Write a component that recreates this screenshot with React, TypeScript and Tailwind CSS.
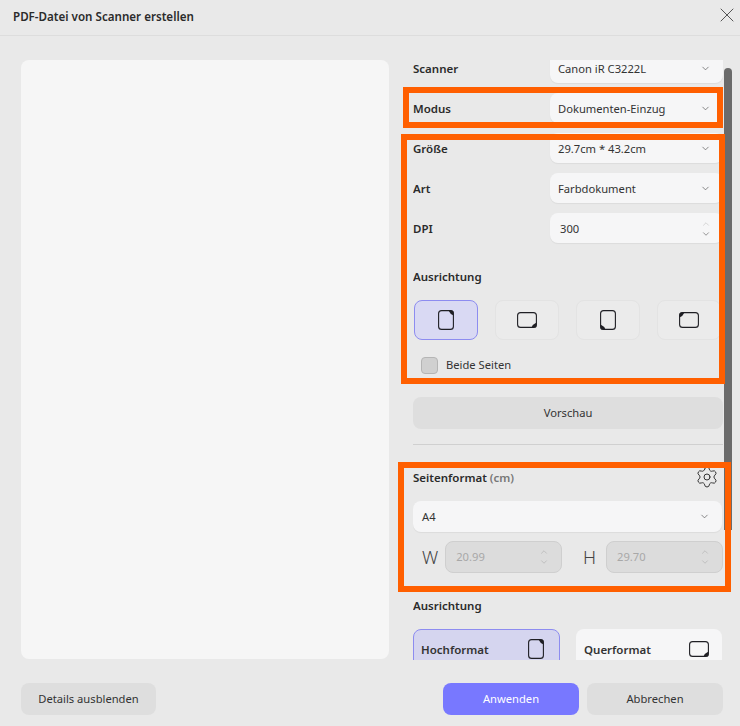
import { ChevronDown, ChevronUp, Settings, X } from "lucide-react";

type Corner = "tr" | "br" | "bl" | "tl";

// page outline with a filled dog-ear in one corner
const PageIcon = ({ wide, corner }: { wide: boolean; corner: Corner }) => {
  const w = wide ? 20 : 16;
  const h = wide ? 16 : 20;
  const s = 5.5;
  const ear = {
    tr: `M${w - s} 0.5 H${w - 2} Q${w - 0.5} 0.5 ${w - 0.5} 2 V${s} Q${w - 4} 4 ${w - s} 0.5 Z`,
    br: `M${w - 0.5} ${h - s} V${h - 2} Q${w - 0.5} ${h - 0.5} ${w - 2} ${h - 0.5} H${w - s} Q${w - 4} ${h - 4} ${w - 0.5} ${h - s} Z`,
    bl: `M${s} ${h - 0.5} H2 Q0.5 ${h - 0.5} 0.5 ${h - 2} V${h - s} Q4 ${h - 4} ${s} ${h - 0.5} Z`,
    tl: `M0.5 ${s} V2 Q0.5 0.5 2 0.5 H${s} Q4 4 0.5 ${s} Z`,
  }[corner];
  return (
    <svg width={w} height={h} viewBox={`0 0 ${w} ${h}`} fill="none">
      <rect x="0.6" y="0.6" width={w - 1.2} height={h - 1.2} rx="3" stroke="#1f1f24" strokeWidth="1.1" />
      <path d={ear} fill="#1f1f24" />
    </svg>
  );
};

const Select = ({ value, className = "" }: { value: string; className?: string }) => (
  <div className={`flex items-center justify-between rounded-lg bg-[#f6f6f7] pr-3 shadow-[0_1px_1px_rgba(0,0,0,0.06)] ${className}`}>
    <span className="text-[11.2px] text-[#333]">{value}</span>
    <ChevronDown size={11} strokeWidth={1.5} className="text-[#555]" />
  </div>
);

const Row = ({ label, children }: { label: string; children: React.ReactNode }) => (
  <div className="flex h-[40px] items-center justify-between">
    <span className="text-[11.5px] font-semibold text-[#2b2b2b]">{label}</span>
    {children}
  </div>
);

const Stepper = ({ up, down, className = "" }: { up: string; down: string; className?: string }) => (
  <div className={`flex flex-col items-center ${className}`}>
    <ChevronUp size={10} strokeWidth={1.2} className={up} />
    <ChevronDown size={10} strokeWidth={1.2} className={down} />
  </div>
);

const SizeInput = ({ label, value, gap }: { label: string; value: string; gap: string }) => (
  <div className={`flex items-center ${gap}`}>
    <span className="text-[18px] font-light text-[#444]">{label}</span>
    <div className="flex h-[32px] w-[117px] items-center justify-between rounded-lg border border-[#cfcfcf] bg-[#dcdcdc] pl-[10px] pr-3">
      <span className="text-[11.2px] text-[#a8a8a8]">{value}</span>
      <Stepper up="text-[#a3a3a3]" down="text-[#a3a3a3]" />
    </div>
  </div>
);

const OrientButton = ({ wide, corner, active }: { wide: boolean; corner: Corner; active?: boolean }) => (
  <div
    className={`flex h-[40px] w-[64px] shrink-0 items-center justify-center rounded-lg border ${
      active ? "border-[#8d8cf0] bg-[#d9d9f3]" : "border-[#e3e3e3] bg-[#ebebeb]"
    }`}
  >
    <PageIcon wide={wide} corner={corner} />
  </div>
);

const Highlight = ({ className }: { className: string }) => (
  <div className={`pointer-events-none absolute border-[6px] border-[#ff5f00] ${className}`} />
);

export default function App() {
  return (
    <div className="relative flex h-[726px] w-[740px] flex-col overflow-hidden bg-[#e9e9e9] font-['Noto_Sans',sans-serif] leading-[18px]">
      <header className="flex h-[36px] shrink-0 items-center justify-between border-b border-[#dddddd] pl-[13px] pr-[1px]">
        <h1 className="-mt-[2px] text-[11.6px] font-semibold text-[#2b2b2b]">PDF-Datei von Scanner erstellen</h1>
        <X size={24} strokeWidth={0.9} className="-mt-[6px] text-[#444]" />
      </header>

      <div className="flex">
        <div className="ml-[21px] mt-[24px] h-[599px] w-[368px] rounded-lg bg-[#f6f6f6]" />

        <div className="ml-[24px] mt-[24px] h-[600px] w-[310px] overflow-hidden">
          <div className="-mt-[12px]">
            <div className="translate-y-px">
              <Row label="Scanner">
                <Select value="Canon iR C3222L" className="h-[30px] w-[173px] -translate-y-px pl-2 pt-px" />
              </Row>
              <Row label="Modus">
                <Select value="Dokumenten-Einzug" className="h-[30px] w-[173px] -translate-y-px pl-2 pt-px" />
              </Row>
              <Row label="Größe">
                <Select value="29.7cm * 43.2cm" className="h-[30px] w-[173px] -translate-y-px pl-2 pt-px" />
              </Row>
              <Row label="Art">
                <Select value="Farbdokument" className="h-[30px] w-[173px] -translate-y-px pl-2 pt-px" />
              </Row>
              <Row label="DPI">
                <div className="flex h-[30px] w-[173px] -translate-y-px items-center justify-between rounded-lg bg-[#f6f6f7] pl-[10px] pr-3 pt-px shadow-[0_1px_1px_rgba(0,0,0,0.06)]">
                  <span className="text-[11.2px] text-[#333]">300</span>
                  <Stepper up="text-[#b5b5b5]" down="text-[#333]" />
                </div>
              </Row>
            </div>

            <div className="mt-[20px] text-[11.5px] font-semibold text-[#2b2b2b]">Ausrichtung</div>
            <div className="mt-[14px] flex gap-[17px] pl-[1px]">
              <OrientButton wide={false} corner="tr" active />
              <OrientButton wide corner="br" />
              <OrientButton wide={false} corner="bl" />
              <OrientButton wide corner="tl" />
            </div>
            <div className="mt-[16px] flex items-center pl-[8px]">
              <div className="h-[17px] w-[17px] rounded-[4px] border border-[#b5b5b5] bg-[#d0d0d0]" />
              <span className="ml-[8px] text-[11.2px] text-[#333]">Beide Seiten</span>
            </div>

            <div className="mt-[23px] flex h-[32px] items-center justify-center rounded-lg bg-[#dedede] text-[11.2px] text-[#333]">
              Vorschau
            </div>
            <div className="mt-[15px] h-px bg-[#d0d0d0]" />

            <div className="mt-[24px] flex items-center justify-between pr-[4px]">
              <span className="text-[11.5px] font-semibold text-[#2b2b2b]">
                Seitenformat <span className="text-[#777]">(cm)</span>
              </span>
              <Settings size={24} strokeWidth={1} className="-my-[4px] -translate-y-px text-[#333]" />
            </div>
            <Select value="A4" className="mt-[14px] h-[31px] w-[309px] pl-[9px]" />
            <div className="mt-[9px] flex justify-between pl-[9px]">
              <SizeInput label="W" value="20.99" gap="gap-[7px]" />
              <SizeInput label="H" value="29.70" gap="gap-[10px]" />
            </div>

            <div className="mt-[24px] text-[11.5px] font-semibold text-[#2b2b2b]">Ausrichtung</div>
            <div className="mt-[14px] flex justify-between pr-[1px]">
              <div className="flex h-[60px] w-[147px] items-start justify-between rounded-lg border border-[#8d8cf0] bg-[#d5d5ef] pl-[7px] pr-[15px] pt-[9px]">
                <span className="mt-[2px] text-[11.5px] font-semibold text-[#333]">Hochformat</span>
                <PageIcon wide={false} corner="tr" />
              </div>
              <div className="flex h-[60px] w-[146px] items-start justify-between rounded-lg bg-[#f6f6f7] pl-[8px] pr-[13px] pt-[12px]">
                <span className="text-[11.5px] font-semibold text-[#333]">Querformat</span>
                <PageIcon wide corner="br" />
              </div>
            </div>
          </div>
        </div>
      </div>

      <footer className="mt-[23px] flex pl-[21px] pr-[17px]">
        <button className="h-[32px] w-[135px] rounded-lg bg-[#dedede] text-[11.2px] text-[#333]">Details ausblenden</button>
        <button className="ml-auto h-[32px] w-[136px] rounded-lg bg-[#7878ff] text-[11.2px] text-white">Anwenden</button>
        <button className="ml-[8px] h-[32px] w-[136px] rounded-lg bg-[#dedede] text-[11.2px] text-[#333]">Abbrechen</button>
      </footer>

      {/* scrollbar thumb */}
      <div className="absolute left-[724px] top-[68px] h-[462px] w-[8px] rounded-t-[4px] bg-[#6b6b6b]" />

      {/* orange annotation boxes */}
      <Highlight className="left-[403px] top-[87px] h-[41px] w-[320px]" />
      <Highlight className="left-[401px] top-[134px] h-[250px] w-[324px]" />
      <Highlight className="left-[398px] top-[462px] h-[130px] w-[333px]" />
    </div>
  );
}
